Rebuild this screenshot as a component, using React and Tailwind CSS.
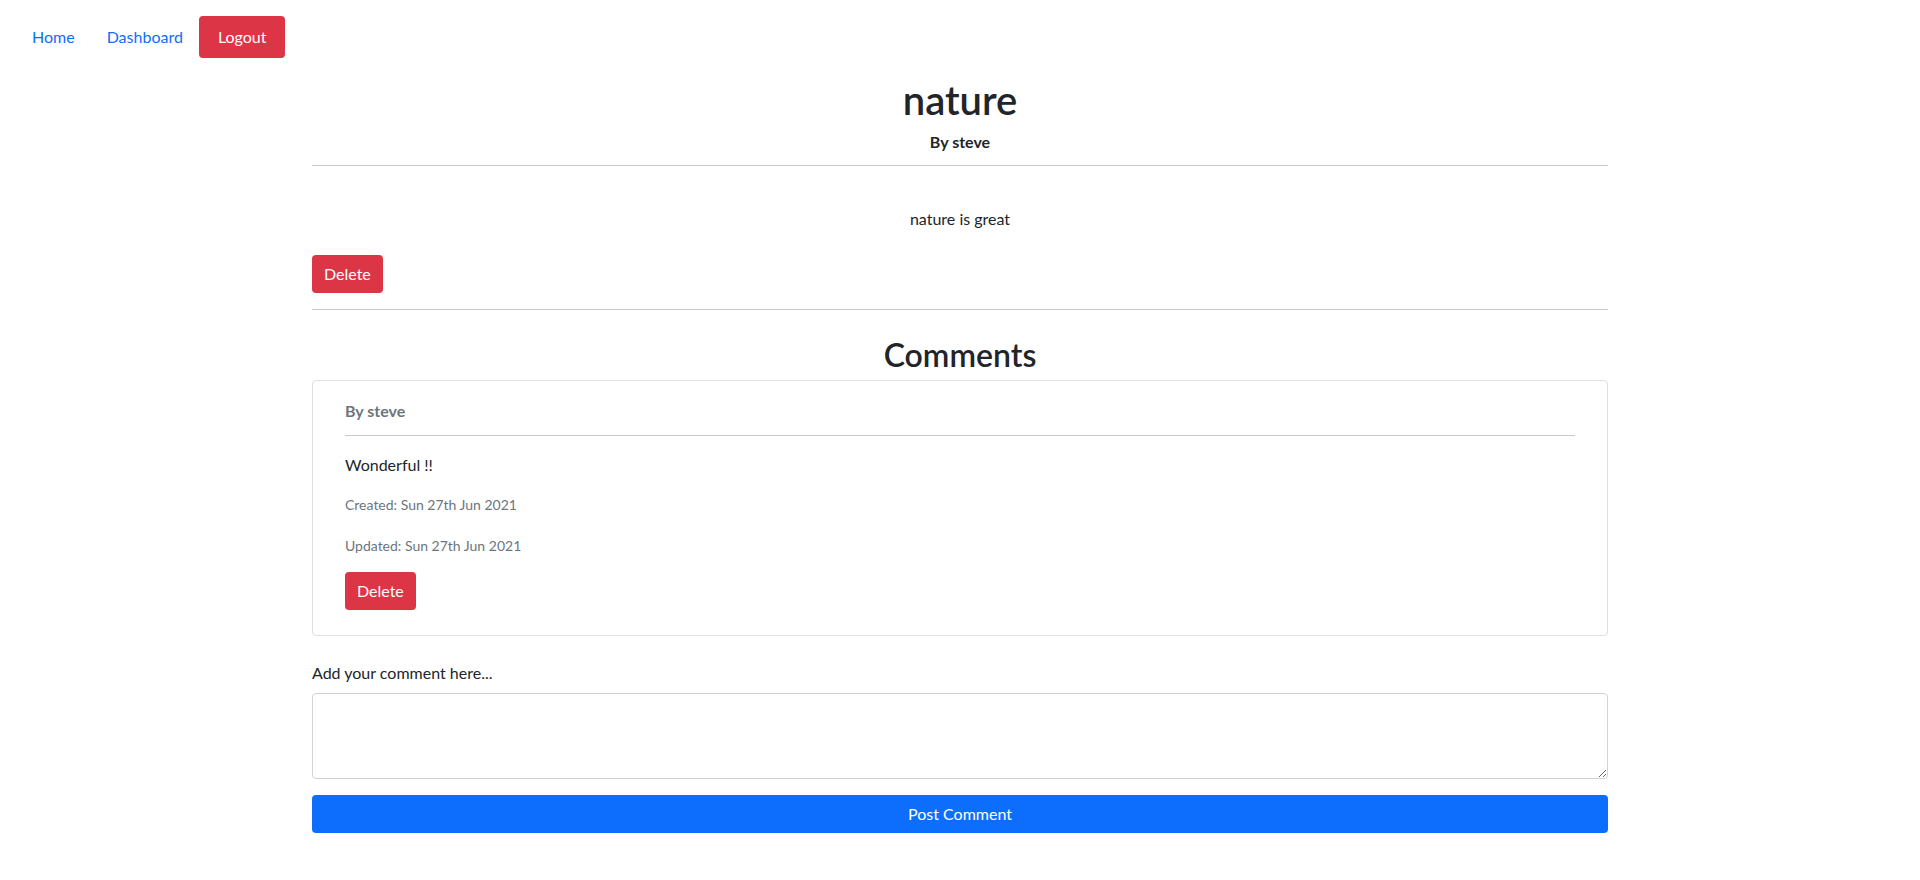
export default function App() {
  return (
    <div className="min-h-screen bg-white font-['Lato','Liberation_Sans',sans-serif] text-[16px] text-[#212529]">
      <nav className="flex items-center px-4 pt-4">
        <a href="#" className="px-4 text-[#0d6efd]">
          Home
        </a>
        <a href="#" className="px-4 text-[#0d6efd]">
          Dashboard
        </a>
        <button className="h-[42px] rounded-[4px] bg-[#dc3545] px-[19px] text-white">Logout</button>
      </nav>
      <main className="mx-auto max-w-[1320px] px-3">
        <h1 className="mt-[18px] text-center text-[40px] font-semibold leading-[1.2]">nature</h1>
        <p className="mt-[6px] text-center font-bold leading-6">By steve</p>
        <hr className="mt-[11px] border-t border-[#c8c9ca]" />
        <p className="mt-[41px] text-center leading-6">nature is great</p>
        <button className="mt-[24px] h-[38px] rounded-[4px] bg-[#dc3545] px-3 text-white">Delete</button>
        <hr className="mt-4 border-t border-[#c8c9ca]" />

        <h2 className="mt-[26px] text-center text-[32px] font-semibold leading-[1.2]">Comments</h2>
        <div className="mt-[6px] rounded-[4px] border border-[#dfdfdf] px-8 pt-[18px] pb-[25px]">
          <p className="font-bold leading-6 text-[#6c757d]">By steve</p>
          <hr className="mt-3 border-t border-[#c8c9ca]" />
          <p className="mt-[17px] leading-6">Wonderful !!</p>
          <p className="mt-[17px] text-[14px] leading-[21px] text-[#6c757d]">Created: Sun 27th Jun 2021</p>
          <p className="mt-[20px] text-[14px] leading-[21px] text-[#6c757d]">Updated: Sun 27th Jun 2021</p>
          <button className="mt-4 h-[38px] rounded-[4px] bg-[#dc3545] px-3 text-white">Delete</button>
        </div>

        <label className="mt-[25px] block leading-6">Add your comment here...</label>
        <textarea className="mt-[8px] block h-[86px] w-full rounded-[4px] border border-[#ced4da] px-3 py-1.5" />
        <button className="mt-4 h-[38px] w-full rounded-[4px] bg-[#0d6efd] text-white">Post Comment</button>
      </main>
    </div>
  );
}
